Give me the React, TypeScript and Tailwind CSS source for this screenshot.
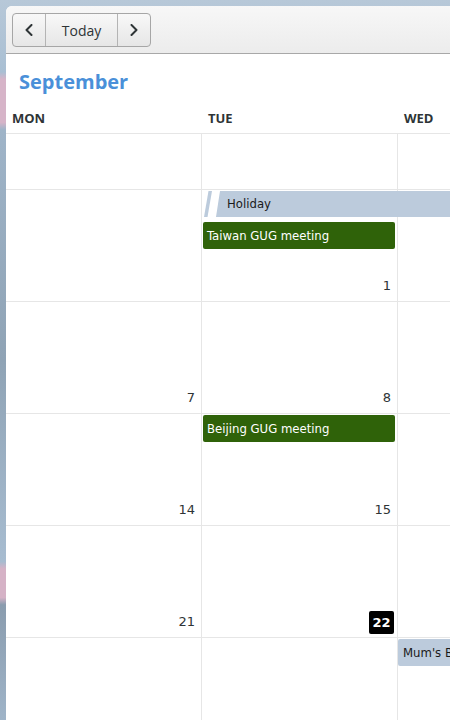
import React from "react";

const evFont = { fontFamily: '"DejaVu Sans Condensed", "DejaVu Sans", "Liberation Sans", sans-serif' };
const numFont = { fontFamily: '"DejaVu Sans", "Liberation Sans", sans-serif' };

function Chevron({ dir }: { dir: "l" | "r" }) {
  return (
    <svg width="8" height="12" viewBox="0 0 8 12" fill="none">
      <path
        d={dir === "l" ? "M6.5 1 L1.5 6 L6.5 11" : "M1.5 1 L6.5 6 L1.5 11"}
        stroke="#2e3436"
        strokeWidth="2"
        strokeLinecap="round"
        strokeLinejoin="round"
      />
    </svg>
  );
}

function Cell({
  num,
  today,
  children,
  h,
}: {
  num?: string;
  today?: boolean;
  children?: React.ReactNode;
  h: string;
}) {
  return (
    <div className={`w-[196px] shrink-0 border-r border-[#e6e6e6] flex flex-col ${h}`}>
      <div className="flex flex-col gap-[5px] pt-[1px] pl-[1px] pr-[2px]">{children}</div>
      {num && (
        <div className="mt-auto flex justify-end">
          {today ? (
            <div
              className="mr-[3px] mb-[3px] h-[23px] w-[25px] rounded-[2px] bg-black text-white text-[13px] font-bold leading-[23px] text-center"
              style={numFont}
            >
              {num}
            </div>
          ) : (
            <div className="pr-[6px] pb-[7px] text-[13px] leading-[16px] text-[#2e3436]" style={numFont}>
              {num}
            </div>
          )}
        </div>
      )}
    </div>
  );
}

function GreenEvent({ label }: { label: string }) {
  return (
    <div
      className="h-[27px] rounded-[2px] bg-[#2f6209] text-white text-[13px] leading-[27px] pl-[4px] whitespace-nowrap overflow-hidden"
      style={evFont}
    >
      {label}
    </div>
  );
}

export default function App() {
  return (
    <div className="w-[450px] h-[720px] overflow-hidden bg-[linear-gradient(180deg,#b7c8d8_0%,#a9bfd3_10%,#d6b4c8_11%,#d6b4c8_17%,#9fb4c8_18%,#8fa3b5_50%,#a7bcd0_78%,#d5b2c6_79%,#d5b2c6_83%,#8a9cae_84%,#9fb4c8_100%)]">
      <div className="ml-[6px] mt-[6px] h-[714px] w-[444px] overflow-hidden rounded-tl-[6px] bg-white flex flex-col">
        {/* header bar */}
        <div className="h-[48px] shrink-0 border-b border-[#a8a8a8] bg-[linear-gradient(180deg,#f7f7f7,#ececec)] pt-[7px] pl-[6px]">
          <div
            className="flex h-[34px] w-[139px] rounded-[4px] border border-[#a6a6a6] bg-[linear-gradient(180deg,#f8f8f8,#e6e6e6)] overflow-hidden"
            style={{ fontFamily: '"Open Sans", "Noto Sans", sans-serif' }}
          >
            <div className="w-[33px] flex items-center justify-center border-r border-[#b4b4b4]">
              <Chevron dir="l" />
            </div>
            <div className="w-[72px] flex items-center justify-center border-r border-[#b4b4b4] text-[14px] text-[#2e3436]">
              Today
            </div>
            <div className="flex-1 flex items-center justify-center">
              <Chevron dir="r" />
            </div>
          </div>
        </div>

        {/* month title */}
        <div
          className="h-[42px] shrink-0 pt-[14px] pl-[13px] text-[20px] leading-[28px] font-bold text-[#4a90d9]"
          style={{ fontFamily: '"Open Sans", "Noto Sans", sans-serif' }}
        >
          September
        </div>

        {/* weekday headers */}
        <div
          className="h-[38px] shrink-0 border-b border-[#e6e6e6] flex pt-[13px] text-[13px] leading-[18px] font-bold text-[#2e3436]"
          style={{ fontFamily: '"Open Sans", "Noto Sans", sans-serif' }}
        >
          <div className="w-[196px] shrink-0 pl-[6px]">MON</div>
          <div className="w-[196px] shrink-0 pl-[6px]">TUE</div>
          <div className="w-[196px] shrink-0 pl-[6px]">WED</div>
        </div>

        {/* row 1 */}
        <div className="h-[56px] shrink-0 border-b border-[#e6e6e6] flex">
          <Cell h="h-[55px]" />
          <Cell h="h-[55px]" />
          <Cell h="h-[55px]" />
        </div>

        {/* row 2 */}
        <div className="relative h-[112px] shrink-0 border-b border-[#e6e6e6] flex">
          <Cell h="h-[111px]" />
          <Cell h="h-[111px]" num="1">
            <div className="h-[26px]" />
            <GreenEvent label="Taiwan GUG meeting" />
          </Cell>
          <Cell h="h-[111px]" />
          <div className="absolute left-[197px] top-[1px] right-0 h-[26px]">
            <svg width="14" height="26" viewBox="0 0 14 26" className="absolute left-0 top-0">
              <polygon points="1,26 4.5,26 9,0 5.5,0" fill="#bccbdc" />
            </svg>
            <div
              className="absolute inset-0 bg-[#bccbdc] [clip-path:polygon(17px_0,100%_0,100%_100%,13px_100%)] pl-[24px] text-[13px] leading-[26px] text-[#1a1a1a]"
              style={evFont}
            >
              Holiday
            </div>
          </div>
        </div>

        {/* row 3 */}
        <div className="h-[112px] shrink-0 border-b border-[#e6e6e6] flex">
          <Cell h="h-[111px]" num="7" />
          <Cell h="h-[111px]" num="8" />
          <Cell h="h-[111px]" />
        </div>

        {/* row 4 */}
        <div className="h-[112px] shrink-0 border-b border-[#e6e6e6] flex">
          <Cell h="h-[111px]" num="14" />
          <Cell h="h-[111px]" num="15">
            <GreenEvent label="Beijing GUG meeting" />
          </Cell>
          <Cell h="h-[111px]" />
        </div>

        {/* row 5 */}
        <div className="h-[112px] shrink-0 border-b border-[#e6e6e6] flex">
          <Cell h="h-[111px]" num="21" />
          <Cell h="h-[111px]" num="22" today />
          <Cell h="h-[111px]" />
        </div>

        {/* row 6 */}
        <div className="h-[112px] shrink-0 flex">
          <Cell h="h-[111px]" />
          <Cell h="h-[111px]" />
          <div className="w-[196px] shrink-0 pt-[1px]">
            <div
              className="h-[27px] rounded-l-[2px] bg-[#bccbdc] pl-[5px] text-[13px] leading-[27px] text-[#1a1a1a] whitespace-nowrap"
              style={evFont}
            >
              Mum's Birthday
            </div>
          </div>
        </div>
      </div>
    </div>
  );
}
